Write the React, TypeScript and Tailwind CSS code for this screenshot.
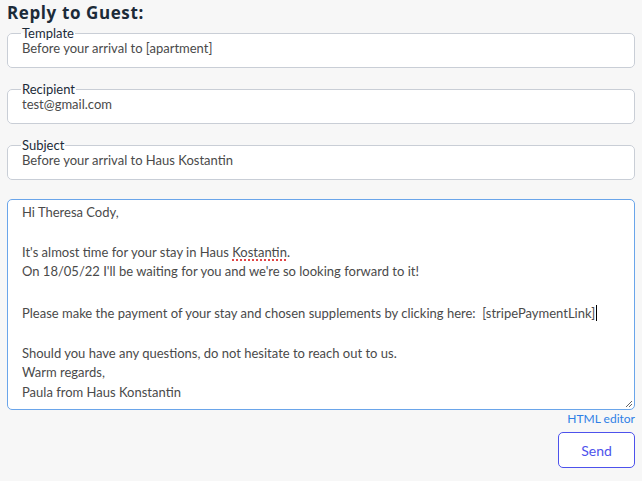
import React from "react";

const FONT = "font-['Lato','Open_Sans',sans-serif]";

function Field({ label, value }: { label: string; value: string }) {
  return (
    <fieldset className="mx-[7px] rounded-[5px] border border-[#c9ced6] bg-white px-[14px] pb-[11px] pt-0">
      <legend className="-ml-[1px] px-[1px] text-[13px] leading-[14px] text-[#1c2b39]">{label}</legend>
      <div className="text-[13px] leading-[16px] text-[#4a4a4a]">{value}</div>
    </fieldset>
  );
}

export default function App() {
  return (
    <div className={`min-h-[481px] w-[642px] bg-[#f7f7f7] ${FONT}`}>
      <h2 className="px-[7px] pt-[3px] font-['Open_Sans',sans-serif] text-[17px] font-bold leading-[20px] tracking-[0.6px] text-[#1c2b39]">
        Reply to Guest:
      </h2>
      <div className="mt-[3px] flex flex-col gap-[14px]">
        <Field label="Template" value="Before your arrival to [apartment]" />
        <Field label="Recipient" value="test@gmail.com" />
        <Field label="Subject" value="Before your arrival to Haus Kostantin" />
        <div className="relative mx-[7px] mt-[5px] h-[211px] rounded-[5px] border border-[#6aa5ea] bg-white px-[14px] pt-[3px] text-[13px] leading-[19.8px] text-[#4a4a4a]">
          <p>Hi Theresa Cody,</p>
          <p>&nbsp;</p>
          <p>
            It's almost time for your stay in Haus{" "}
            <span className="underline decoration-dotted decoration-[#e04545] decoration-2 underline-offset-[3px]">Kostantin</span>.
          </p>
          <p>On 18/05/22 I'll be waiting for you and we're so looking forward to it!</p>
          <p>&nbsp;</p>
          <p>
            Please make the payment of your stay and chosen supplements by clicking here:&nbsp; [stripePaymentLink]
            <span className="ml-[1px] inline-block h-[16px] w-px translate-y-[3px] bg-black" />
          </p>
          <p>&nbsp;</p>
          <p>Should you have any questions, do not hesitate to reach out to us.</p>
          <p>Warm regards,</p>
          <p>Paula from Haus Konstantin</p>
          <svg className="absolute bottom-[1px] right-[1px]" width="8" height="8" viewBox="0 0 8 8">
            <path d="M7 1 L1 7 M7 4 L4 7" stroke="#666" strokeWidth="1" />
          </svg>
        </div>
      </div>
      <div className="flex flex-col items-end px-[7px]">
        <a className="mt-[1px] text-[12px] leading-[16px] text-[#2f7fe6]">HTML editor</a>
        <button className="mt-[5px] h-[36px] w-[77px] rounded-[5px] border border-[#4d52ec] bg-white text-[14px] text-[#4d52ec]">
          Send
        </button>
      </div>
    </div>
  );
}
